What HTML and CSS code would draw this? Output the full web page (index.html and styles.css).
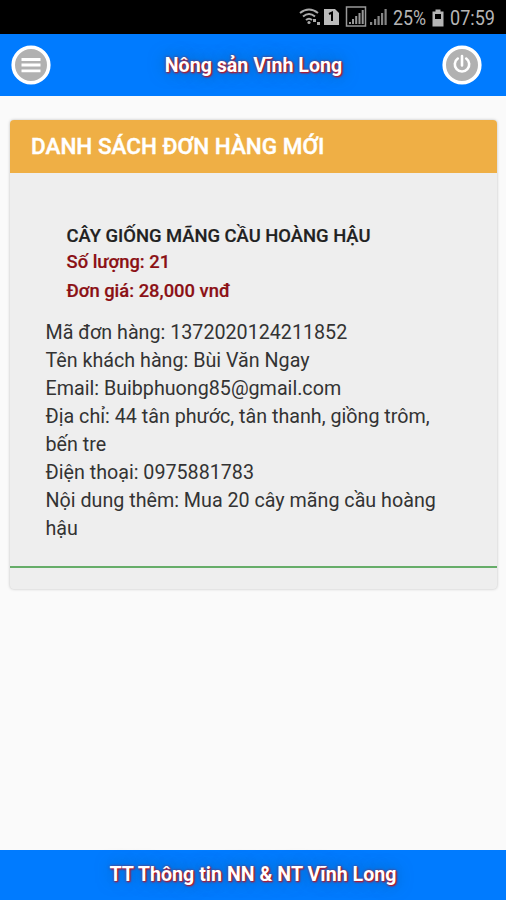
FILE: index.html
```
<!DOCTYPE html>
<html lang="vi">
<head>
    <meta charset="UTF-8">
    <meta name="viewport" content="width=device-width, initial-scale=1.0">
    <title>Nông sản Vĩnh Long</title>
    <link rel="stylesheet" href="styles.css">
</head>
<body>
    <div class="statusbar">
        <svg class="icons" width="90" height="24" viewBox="0 5 90 24">
            <!-- wifi -->
            <g fill="none" stroke="#aaa" stroke-width="2">
                <path d="M1 13 Q10 6 19 13"/>
                <path d="M4 16.500 Q10 11.500 16 16.500"/>
                <path d="M7 20 Q10 17.500 13 20"/>
            </g>
            <circle cx="10" cy="22.500" r="1.600" fill="#aaa"/>
            <path d="M14 19h3v3h-3zM18 22h3v3h-3z" fill="#aaa"/>
            <!-- sim 1 -->
            <path d="M25 9h11l4 4v12H25z" fill="#bbb"/>
            <path d="M30 14l3-1.500v8.500" fill="none" stroke="#000" stroke-width="2"/>
            <!-- signal -->
            <rect x="47.500" y="7" width="19" height="19" fill="none" stroke="#999" stroke-width="1.500"/>
            <path d="M50 22h2v2h-2zM53 19h2v5h-2zM56.200 16h2v8h-2zM59.500 13h2v11h-2zM62.700 10h2v14h-2z" fill="#999"/>
            <path d="M71 22h2.200v3h-2.200zM75 19h2.200v6h-2.200zM78.500 16h2.200v9h-2.200zM82 13h2.200v12h-2.200zM85.500 9h2.200v16h-2.200z" fill="#858585"/>
        </svg>
        <span class="percent">25%</span>
        <svg class="battery" width="14" height="18" viewBox="0 0 14 18">
            <path d="M4.500 0.500h5v2h3v15h-11v-15h3z" fill="#b5b5b5"/>
            <path d="M4 5h6v5H4z" fill="#000"/>
        </svg>
        <span class="clock">07:59</span>
    </div>

    <div class="header">
        <button class="round">
            <svg width="40" height="40" viewBox="0 0 40 40">
                <circle cx="20" cy="20" r="17.800" fill="#b1b1b1" stroke="#fff" stroke-width="3.600"/>
                <path d="M10.500 14.500h19M10.500 20h19M10.500 25.800h19" stroke="#fff" stroke-width="2.800"/>
            </svg>
        </button>
        <h1 class="title">Nông sản Vĩnh Long</h1>
        <button class="round">
            <svg width="40" height="40" viewBox="0 0 40 40">
                <circle cx="20" cy="20" r="17.800" fill="#b1b1b1" stroke="#fff" stroke-width="3.600"/>
                <path d="M15.800 13.500a7.200 7.200 0 1 0 8.400 0M20 11v9.500" fill="none" stroke="#fff" stroke-width="2.600" stroke-linecap="round"/>
            </svg>
        </button>
    </div>

    <div class="main">
        <div class="card">
            <h2 class="card-title">DANH SÁCH ĐƠN HÀNG MỚI</h2>
            <div class="order">
                <div class="product">
                    <h3 class="name">CÂY GIỐNG MÃNG CẦU HOÀNG HẬU</h3>
                    <p class="amount">Số lượng: 21</p>
                    <p class="price">Đơn giá: 28,000 vnđ</p>
                </div>
                <div class="info">
                    <p>Mã đơn hàng: 1372020124211852</p>
                    <p>Tên khách hàng: Bùi Văn Ngay</p>
                    <p>Email: Buibphuong85@gmail.com</p>
                    <p>Địa chỉ: 44 tân phước, tân thanh, giồng trôm, bến tre</p>
                    <p>Điện thoại: 0975881783</p>
                    <p>Nội dung thêm: Mua 20 cây mãng cầu hoàng hậu</p>
                </div>
            </div>
        </div>
    </div>

    <div class="footer">
        <h1 class="title">TT Thông tin NN &amp; NT Vĩnh Long</h1>
    </div>
</body>
</html>
```
FILE: styles.css
```
* {
    margin: 0;
    padding: 0;
    box-sizing: border-box;
}
body{
    display: flex;
    flex-direction: column;
    height: 900px;
    background-color: #fafafa;
    font-family: Roboto, sans-serif;
    color: #212121;
    overflow: hidden;
}
.statusbar{
    display: flex;
    justify-content: flex-end;
    align-items: center;
    height: 34px;
    padding-top: 1px;
    padding-right: 11px;
    background-color: #000;
    color: #b5b5b5;
    font-size: 21px;
}
.icons{
    margin-top: -1px;
    margin-right: 4px;
}
.battery{
    margin: 0 5px 0 4px;
}
.percent{
    width: 34px;
    transform: scaleX(0.85);
    transform-origin: left;
}
.clock{
    width: 45px;
    transform: scaleX(0.86);
    transform-origin: left;
}
.header{
    display: grid;
    grid-template-columns: 40px 1fr 40px;
    align-items: center;
    height: 62px;
    padding: 0 24px 0 11px;
    background-color: #007bff;
}
.header .title{
    padding-left: 14px;
}
.round{
    width: 40px;
    height: 40px;
    border: none;
    background-color: transparent;
}
.round svg{
    display: block;
}
.title{
    font-size: 19.65px;
    font-weight: 700;
    color: white;
    text-align: center;
    white-space: nowrap;
    text-shadow: 1px 1px 2px #e00000, 0 0 3px rgba(200, 0, 0, 0.6), 0 0 16px rgba(0, 100, 130, 0.7);
}
.main{
    flex: 1;
    padding: 24px 9px 0 10px;
}
.card{
    height: 469px;
    background-color: #eee;
    border-radius: 4px;
    box-shadow: 0 0 3px rgba(0, 0, 0, 0.25);
    overflow: hidden;
}
.card-title{
    height: 53px;
    padding-left: 21px;
    background-color: #efaf45;
    color: white;
    font-size: 22.5px;
    font-weight: 500;
    line-height: 53px;
    -webkit-text-stroke: 0.4px white;
}
.order{
    height: 395px;
    padding: 49px 35px 0;
    border-bottom: 2px solid #66ad69;
}
.product{
    padding-left: 21.5px;
    font-size: 18.4px;
    font-weight: 500;
    white-space: nowrap;
    -webkit-text-stroke: 0.2px;
}
.name{
    font-size: 18.4px;
    font-weight: 500;
    line-height: 27px;
}
.amount{
    color: #8b1015;
    line-height: 26px;
}
.price{
    color: #8b1015;
    line-height: 32px;
}
.info{
    padding-top: 11.7px;
    padding-left: 0.5px;
    font-size: 19.7px;
    line-height: 28.1px;
    color: #333;
}
.footer{
    height: 50px;
    background-color: #007bff;
    line-height: 50px;
}
```
